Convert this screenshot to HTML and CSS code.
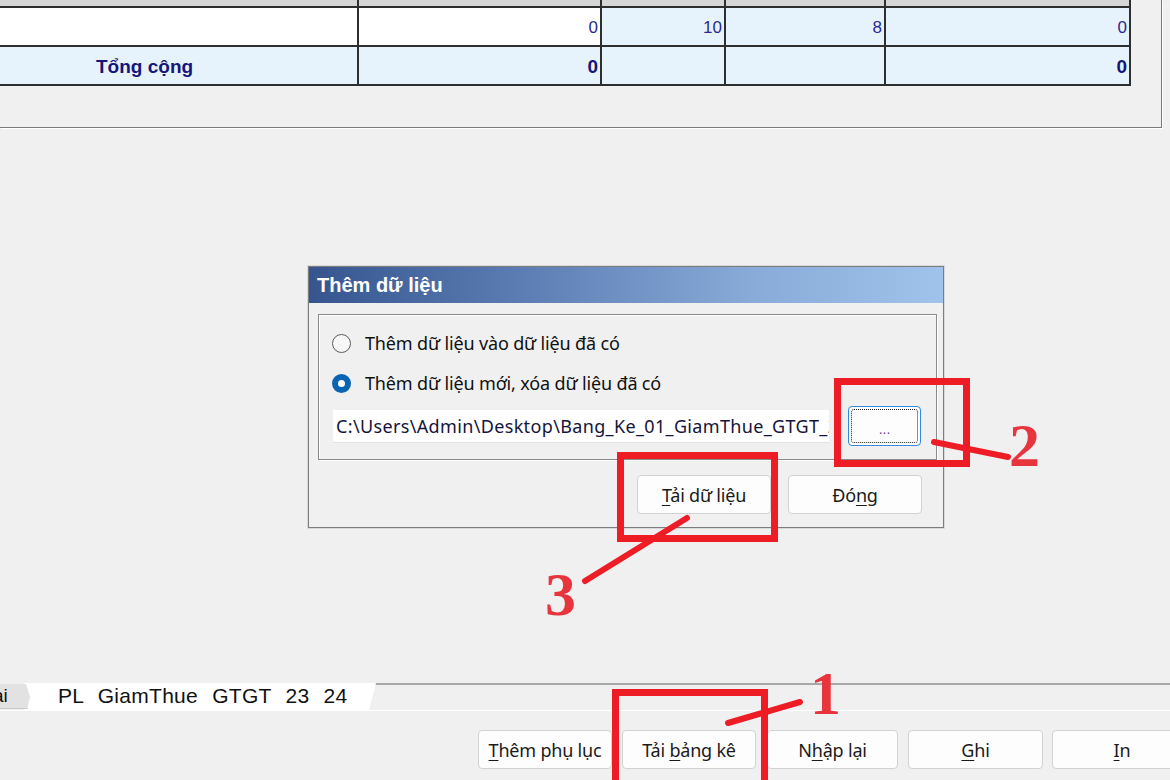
FILE: index.html
```html
<!DOCTYPE html>
<html lang="vi">
<head>
<meta charset="utf-8">
<title>Thêm dữ liệu</title>
<link rel="stylesheet" href="styles.css">
</head>
<body>
<div class="app">
  <div class="top-panel">
    <table class="grid">
      <colgroup>
        <col class="c1"><col class="c2"><col class="c3"><col class="c4"><col class="c5">
      </colgroup>
      <tr class="head"><td></td><td></td><td></td><td></td><td></td></tr>
      <tr class="row">
        <td class="white"></td>
        <td class="white num">0</td>
        <td class="num">10</td>
        <td class="num">8</td>
        <td class="num">0</td>
      </tr>
      <tr class="row total">
        <td class="label">Tổng cộng</td>
        <td class="num">0</td>
        <td></td>
        <td></td>
        <td class="num">0</td>
      </tr>
    </table>
  </div>

  <div class="middle"></div>

  <div class="tabbar">
    <div class="tab tab-prev">ai</div>
    <div class="tab tab-active">PL GiamThue GTGT 23 24</div>
    <div class="tab-rest"></div>
  </div>

  <div class="btnbar">
    <button class="btn b1"><u>T</u>hêm phụ lục</button>
    <button class="btn b2">Tải <u>b</u>ảng kê</button>
    <button class="btn b3">N<u>h</u>ập lại</button>
    <button class="btn b4"><u>G</u>hi</button>
    <button class="btn b5"><u>I</u>n</button>
  </div>

  <div class="dialog">
    <div class="dlg-title">Thêm dữ liệu</div>
    <div class="dlg-body">
      <div class="group">
        <label class="radio-row"><span class="radio"></span>Thêm dữ liệu vào dữ liệu đã có</label>
        <label class="radio-row"><span class="radio checked"></span>Thêm dữ liệu mới, xóa dữ liệu đã có</label>
        <div class="path-row">
          <div class="path">C:\Users\Admin\Desktop\Bang_Ke_01_GiamThue_GTGT_23_24.xlsx</div>
          <button class="browse"><span class="focus">...</span></button>
        </div>
      </div>
      <div class="dlg-actions">
        <button class="btn dbtn"><u>T</u>ải dữ liệu</button>
        <button class="btn dbtn">Đó<u>n</u>g</button>
      </div>
    </div>
  </div>

  <div class="mark mark-1"></div>
  <div class="mark mark-2"></div>
  <div class="mark mark-3"></div>
  <svg class="lines" width="1170" height="780" viewBox="0 0 1170 780">
    <line x1="728" y1="723" x2="800" y2="702"/>
    <line x1="934" y1="442" x2="1008" y2="457"/>
    <line x1="687" y1="518" x2="585" y2="581"/>
  </svg>
  <div class="num-label n1">1</div>
  <div class="num-label n2">2</div>
  <div class="num-label n3">3</div>
</div>
</body>
</html>
```

FILE: styles.css
```css
html, body {
  margin: 0;
  padding: 0;
  background: #f0f0f0;
}
.app {
  position: relative;
  width: 1170px;
  height: 780px;
  overflow: hidden;
  display: flex;
  flex-direction: column;
  background: #f0f0f0;
  font-family: "Noto Sans", "Liberation Sans", sans-serif;
  color: #000;
}

/* top panel with table */
.top-panel {
  height: 127px;
  width: 1161px;
  border-right: 1px solid #7a7a7a;
  border-bottom: 1px solid #7a7a7a;
  box-shadow: 1px 1px 0 #ffffff;
  flex: none;
  overflow: hidden;
}
.grid {
  border-collapse: collapse;
  margin-left: -2px;
  table-layout: fixed;
  width: 1131px;
  font-family: "Liberation Sans", Arial, sans-serif;
  font-size: 17px;
  color: #2a2a90;
}
.c1 { width: 359px; }
.c2 { width: 243px; }
.c3 { width: 124px; }
.c4 { width: 160px; }
.c5 { width: 245px; }
.grid td {
  border: 2px solid #2e2e2e;
  padding: 3px 2px 0 0;
  background: #e7f3fc;
}
.grid .head td {
  height: 6px;
  padding: 0;
  background: #d6d6d6;
  border-top: none;
}
.grid .row td {
  height: 34px;
}
.grid td.white { background: #ffffff; }
.grid td.num { text-align: right; }
.grid .total td {
  font-weight: bold;
  font-size: 19px;
  color: #15157a;
}
.grid .total td.label {
  text-align: left;
  padding-left: 96px;
}

.middle { flex: 1; }

/* tabs */
.tabbar {
  flex: none;
  height: 27px;
  display: flex;
  align-items: stretch;
  border-bottom: 1px solid #ffffff;
}
.tab {
  font-family: "Liberation Sans", Arial, sans-serif;
  font-size: 21px;
  line-height: 25px;
  color: #111;
}
.tab-prev {
  width: 34px;
  margin-left: -4px;
  margin-top: 1px;
  height: 24px;
  background: #e2e2e2;
  border-bottom: 1px solid #c8c8c8;
  clip-path: polygon(0 0, 88% 0, 100% 50%, 92% 100%, 0 100%);
  font-size: 19px;
  line-height: 24px;
  text-indent: -3px;
  position: relative;
  z-index: 1;
}
.tab-active {
  width: 352px;
  margin-left: -6px;
  background: #ffffff;
  padding-left: 34px;
  box-sizing: border-box;
  clip-path: polygon(0 0, 100% 0, 98% 100%, 0 100%);
  word-spacing: 8px;
  letter-spacing: 0.3px;
}
.tab-rest {
  flex: 1;
  border-top: 2px solid #a8a8a8;
  margin-left: -2px;
}

/* bottom buttons */
.btnbar {
  flex: none;
  height: 69px;
  display: flex;
  align-items: flex-start;
  padding-top: 19px;
  padding-left: 478px;
  box-sizing: border-box;
}
.btn {
  font-family: "Noto Sans", "Liberation Sans", sans-serif;
  font-size: 18px;
  height: 39px;
  background: #fdfdfd;
  border: 1px solid #d2d2d2;
  border-radius: 4px;
  color: #1a1a1a;
  padding: 0;
  letter-spacing: -0.2px;
  flex: none;
}
.b1 { width: 134px; }
.b2 { width: 134px; margin-left: 10px; }
.b3 { width: 131px; margin-left: 11px; }
.b4 { width: 135px; margin-left: 10px; }
.b5 { width: 140px; margin-left: 9px; }
.btn u { text-underline-offset: 3px; }

/* dialog */
.dialog {
  position: absolute;
  left: 308px;
  top: 266px;
  width: 634px;
  height: 260px;
  border: 1px solid #7d7d7d;
  box-shadow: 0 0 0 1px #d9d9d9;
  background: #f0f0f0;
  display: flex;
  flex-direction: column;
}
.dlg-title {
  height: 36px;
  background: linear-gradient(to right, #36558f 0%, #5d7fb5 35%, #88abd8 70%, #9fc3ea 100%);
  color: #ffffff;
  font-family: "Liberation Sans", Arial, sans-serif;
  font-weight: bold;
  font-size: 20px;
  line-height: 36px;
  padding-left: 8px;
  flex: none;
}
.dlg-body {
  padding: 11px 6px 0 9px;
  flex: 1;
}
.group {
  height: 146px;
  border: 1px solid #8a8a8a;
  box-shadow: inset 1px 1px 0 #ffffff, 1px 1px 0 #ffffff;
  padding: 14px 8px 0 13px;
  box-sizing: border-box;
}
.radio-row {
  display: flex;
  align-items: center;
  height: 28px;
  margin-bottom: 12px;
  font-size: 18px;
  color: #111;
  letter-spacing: -0.15px;
}
.radio {
  width: 19px;
  height: 19px;
  border-radius: 50%;
  border: 1.5px solid #5a5a5a;
  box-sizing: border-box;
  margin-right: 14px;
  background: #f7f7f7;
  flex: none;
}
.radio.checked {
  border: 6px solid #0a64b4;
  background: #ffffff;
}
.path-row {
  display: flex;
  align-items: center;
  margin-top: -3px;
  margin-left: 1px;
}
.path {
  width: 493px;
  height: 32px;
  background: #ffffff;
  border-bottom: 1px solid #e2e2e2;
  font-family: "Noto Sans", "Liberation Sans", sans-serif;
  font-size: 18px;
  line-height: 32px;
  padding-left: 3px;
  white-space: nowrap;
  overflow: hidden;
  color: #14143a;
  letter-spacing: 0.35px;
}
.browse {
  margin-left: 19px;
  width: 73px;
  height: 40px;
  border: 1px solid #2f8ae0;
  border-radius: 4px;
  background: #fdfdfd;
  padding: 2px;
  box-sizing: border-box;
  flex: none;
}
.browse .focus {
  display: block;
  height: 100%;
  border: 1.5px dotted #222;
  border-radius: 3px;
  font-size: 14px;
  line-height: 38px;
  color: #6a3aa0;
  box-sizing: border-box;
}
.dlg-actions {
  display: flex;
  gap: 17px;
  padding-left: 319px;
  padding-top: 15px;
}
.dbtn {
  width: 134px;
  height: 39px;
  font-size: 18px;
}

/* annotations */
.mark {
  position: absolute;
  border: 7px solid #ee1c25;
  box-sizing: border-box;
}
.mark-1 { left: 612px; top: 689px; width: 156px; height: 100px; }
.mark-2 { left: 834px; top: 378px; width: 136px; height: 89px; }
.mark-3 { left: 617px; top: 452px; width: 161px; height: 90px; }
.lines {
  position: absolute;
  left: 0;
  top: 0;
  pointer-events: none;
}
.lines line {
  stroke: #ee1c25;
  stroke-width: 6;
  stroke-linecap: round;
}
.num-label {
  position: absolute;
  font-family: "Liberation Serif", "Times New Roman", serif;
  font-weight: bold;
  font-size: 62px;
  line-height: 1;
  color: #e8343c;
}
.n1 { left: 810px; top: 662px; }
.n2 { left: 1009px; top: 414px; }
.n3 { left: 545px; top: 563px; }
```
